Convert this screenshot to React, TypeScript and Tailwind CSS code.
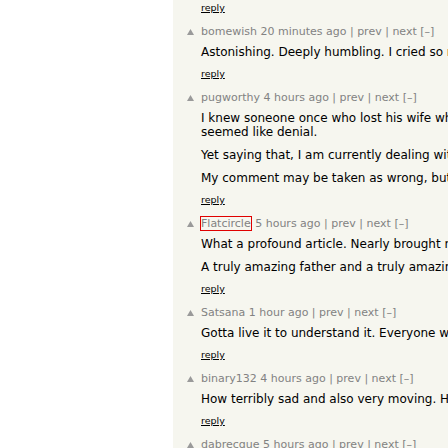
const comments = [
  {
    user: "bomewish",
    age: "20 minutes ago",
    paras: [["Astonishing. Deeply humbling. I cried so much reading this, and then again."]],
  },
  {
    user: "pugworthy",
    age: "4 hours ago",
    paras: [
      ["I knew soneone once who lost his wife when they were both still young and his outlook", "seemed like denial."],
      ["Yet saying that, I am currently dealing with the same kind of loss myself."],
      ["My comment may be taken as wrong, but I mean it with nothing but respect."],
    ],
  },
  {
    user: "Flatcircle",
    age: "5 hours ago",
    boxed: true,
    paras: [
      ["What a profound article. Nearly brought me to tears."],
      ["A truly amazing father and a truly amazing son."],
    ],
  },
  {
    user: "Satsana",
    age: "1 hour ago",
    paras: [["Gotta live it to understand it. Everyone will get there someday."]],
  },
  {
    user: "binary132",
    age: "4 hours ago",
    paras: [["How terribly sad and also very moving. Heartbreaking."]],
  },
  {
    user: "dabrecque",
    age: "5 hours ago",
    paras: [],
  },
];

function Reply() {
  return (
    <div className="h-[14px] leading-[14px] text-[9.5px] text-black">
      <span className="underline">reply</span>
    </div>
  );
}

function Comment({ c }: { c: (typeof comments)[number] }) {
  return (
    <div className="flex pb-[10px]">
      <div className="w-[28px] shrink-0 pl-[14px] pt-[4px]">
        <svg width="7" height="6" viewBox="0 0 7 6" className="block">
          <polygon points="3.5,0 7,6 0,6" fill="#9a9a9a" />
        </svg>
      </div>
      <div className="min-w-0">
        <div className="h-[14px] leading-[14px] text-[11px] text-[#828282] whitespace-nowrap">
          {c.boxed ? (
            <span className="border border-[#e00000] -ml-[1px]">{c.user}</span>
          ) : (
            <span>{c.user}</span>
          )}{" "}
          {c.age} | prev | next [–]
        </div>
        {c.paras.length > 0 && (
          <>
            <div className="mt-[6px] text-[12px] leading-[14px] text-black">
              {c.paras.map((p, i) => (
                <div key={i} className={i > 0 ? "mt-[9px]" : ""}>
                  {p.map((line, j) => (
                    <div key={j} className="whitespace-nowrap">{line}</div>
                  ))}
                </div>
              ))}
            </div>
            <div className="mt-[8px]">
              <Reply />
            </div>
          </>
        )}
      </div>
    </div>
  );
}

export default function App() {
  return (
    <div className="w-[448px] h-[448px] overflow-hidden flex bg-white [font-family:'DejaVu_Sans',Verdana,sans-serif]">
      <div className="w-[173px] shrink-0 bg-white" />
      <div className="flex-1 min-w-0 bg-[#f6f6ef] pt-[1px] overflow-hidden">
        <div className="pl-[28px] pb-[10px]">
          <Reply />
        </div>
        {comments.map((c) => (
          <Comment key={c.user} c={c} />
        ))}
      </div>
    </div>
  );
}
